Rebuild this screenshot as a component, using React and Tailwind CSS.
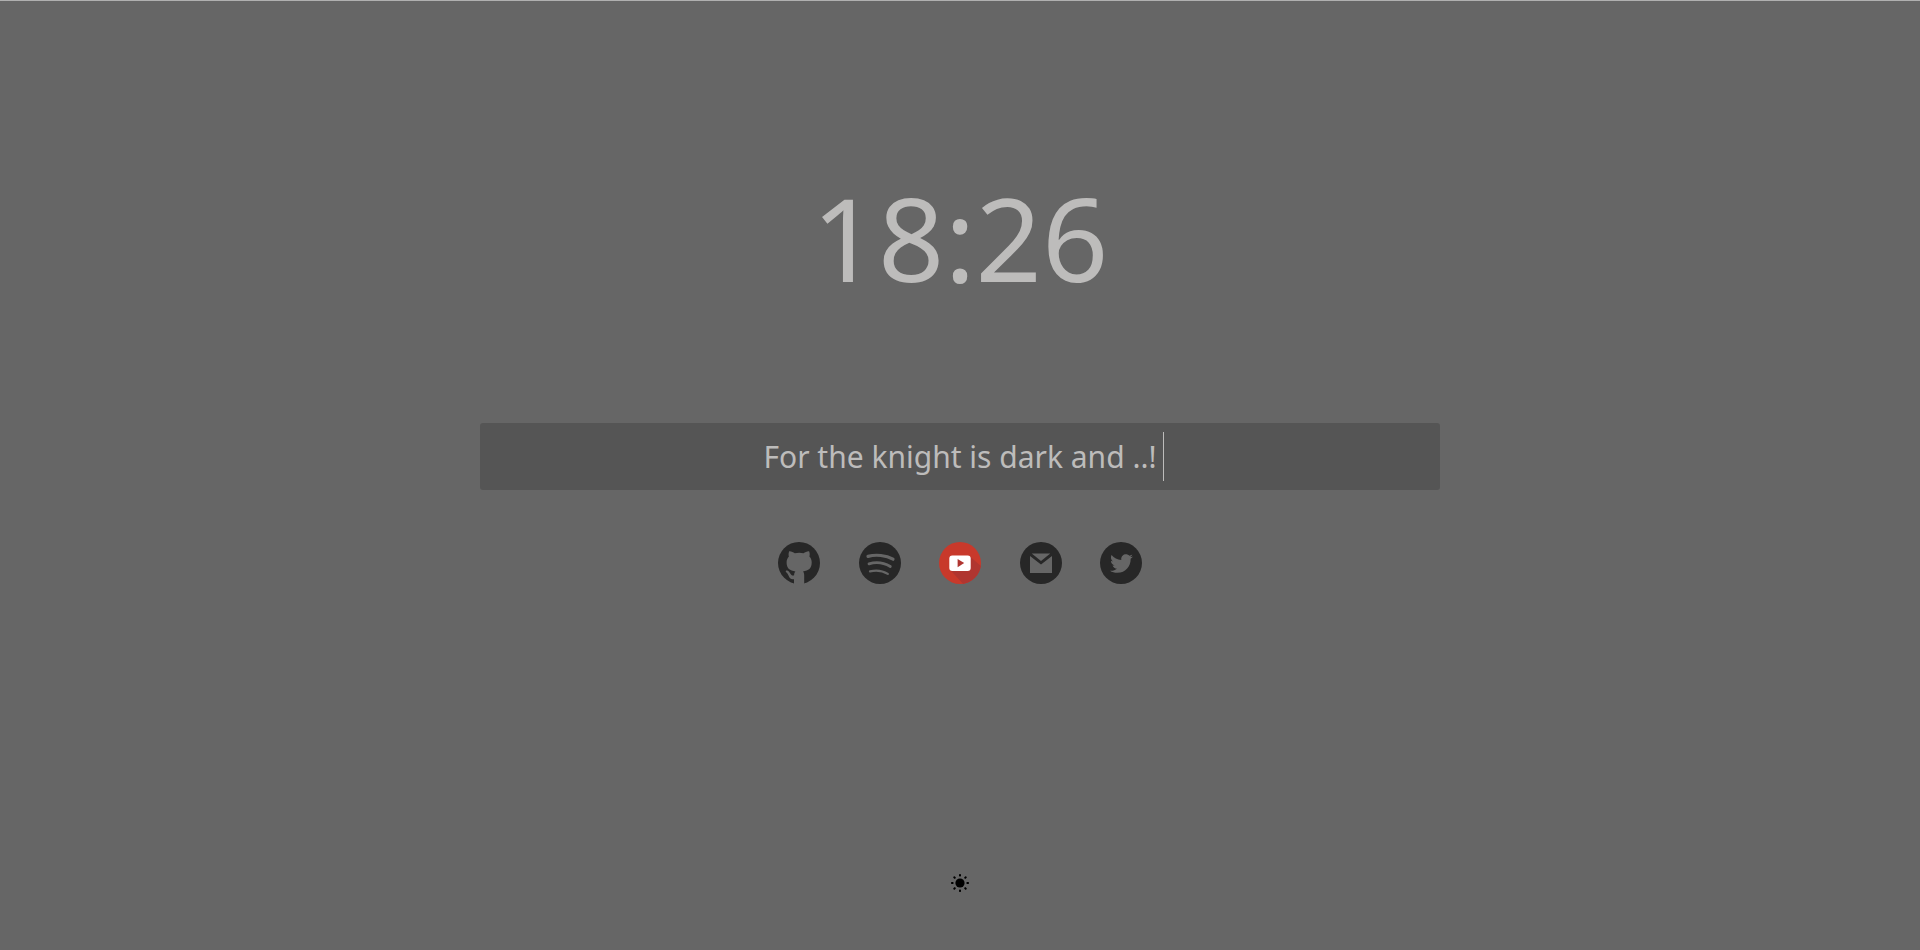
import { FaTwitter } from "react-icons/fa";

function GithubIcon() {
  return (
    <svg viewBox="0 0 42 42" className="size-full" aria-hidden="true">
      <circle cx="21" cy="21" r="21" fill="#272727" />
      <path
        d="M11.200 9.200C13.200 9 15.200 10.200 16.800 11.200C19.500 10.500 23 10.500 25.500 11.200C27.200 10.200 29 9 31.100 9.200C31.900 11.200 31.800 13 31.400 14.600C33 16.400 33.700 18.200 33.700 20.500C33.700 26.500 30.600 28.700 25 29.400C25.900 30.400 26.200 31.600 26.200 33.200V42H16V37.200C12.700 37.800 11.400 35.500 10.500 33.400C9.900 32 9 30.900 8 30.100C7.300 29.200 7.900 28.500 9 28.600C11.600 28.900 12.100 32.800 14.200 33.400C15 33.600 15.600 33.500 16.100 33.200C16.200 31.400 16.500 30.300 17.400 29.400C11.800 28.700 8.600 26.500 8.600 20.500C8.600 18.200 9.400 16.300 10.900 14.600C10.500 13 10.400 11.200 11.200 9.200Z"
        fill="#666"
      />
    </svg>
  );
}

function SpotifyIcon() {
  return (
    <svg viewBox="0 0 42 42" className="size-full" aria-hidden="true">
      <circle cx="21" cy="21" r="21" fill="#272727" />
      <g fill="none" stroke="#666" strokeLinecap="round">
        <path d="M9 14.400C17 12.200 27 13.200 34 17.200" strokeWidth="3.200" />
        <path d="M10 21.800C17 19.900 25 20.800 31.300 24.500" strokeWidth="2.800" />
        <path d="M11 29.300C17 27.900 23.500 28.500 28.800 31.900" strokeWidth="2.300" />
      </g>
    </svg>
  );
}

function YoutubeIcon() {
  return (
    <svg viewBox="0 0 42 42" className="size-full" aria-hidden="true">
      <circle cx="21" cy="21" r="21" fill="#c8392b" />
      <path d="M31 14.500L41.800 24A21 21 0 0 1 24 41.800L11.200 28z" fill="#b03530" />
      <rect x="10.300" y="13.500" width="21.400" height="15.500" rx="3" fill="#fff" />
      <path d="M18.600 17v8.200l6.600-4.100z" fill="#b03530" />
    </svg>
  );
}

function MailIcon() {
  return (
    <svg viewBox="0 0 42 42" className="size-full" aria-hidden="true">
      <circle cx="21" cy="21" r="21" fill="#272727" />
      <path d="M11.700 11.500h18.600L21 19z" fill="#666" />
      <path d="M10 14l11 8.500L32 14v17H10z" fill="#666" />
    </svg>
  );
}

function TwitterIcon() {
  return (
    <span className="flex size-full items-center justify-center rounded-full bg-[#272727] text-[#666]">
      <FaTwitter size={23} />
    </span>
  );
}

function SunIcon() {
  const angles = [0, 45, 90, 135, 180, 225, 270, 315];
  return (
    <svg viewBox="0 0 18 18" className="size-[18px]" aria-hidden="true">
      <circle cx="9" cy="9" r="4.600" />
      {angles.map((a) => (
        <rect key={a} x="8" y="0" width="2" height="2.600" rx="0.800" transform={`rotate(${a} 9 9)`} />
      ))}
    </svg>
  );
}

const links = [
  { label: "GitHub", href: "https://github.com", icon: <GithubIcon /> },
  { label: "Spotify", href: "https://open.spotify.com", icon: <SpotifyIcon /> },
  { label: "YouTube", href: "https://youtube.com", icon: <YoutubeIcon /> },
  { label: "Mail", href: "https://mail.google.com", icon: <MailIcon /> },
  { label: "Twitter", href: "https://twitter.com", icon: <TwitterIcon /> },
];

export default function App() {
  return (
    <main className="flex min-h-screen flex-col items-center border-t border-[#b0b0b0] bg-[#666] pt-[156px] pb-[58px] font-['Noto_Sans',sans-serif] text-[#bdbcbb]">
      <time className="text-[116px] leading-[160px]">18:26</time>

      <div className="relative mt-[106px] w-1/2">
        <input
          type="text"
          aria-label="Search"
          defaultValue="For the knight is dark and ..!"
          className="block h-[67px] w-full rounded-[3px] bg-[#555] text-center text-[30px] caret-transparent outline-none"
        />
        <span className="absolute top-[9px] left-[calc(50%+203px)] h-[49px] w-px bg-[#bdbcbb]" />
      </div>

      <nav className="mt-[52px] flex w-[364px] justify-between">
        {links.map(({ label, href, icon }) => (
          <a key={label} href={href} aria-label={label} className="size-[42px]">
            {icon}
          </a>
        ))}
      </nav>

      <button type="button" aria-label="Toggle theme" className="mt-auto text-black">
        <SunIcon />
      </button>
    </main>
  );
}
